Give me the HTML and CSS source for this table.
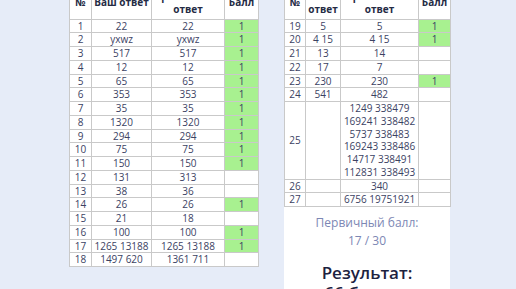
FILE: index.html
```html
<!DOCTYPE html>
<html lang="ru">
<head>
<meta charset="utf-8">
<title>Результаты</title>
<link rel="stylesheet" href="styles.css">
</head>
<body>
<div class="page">
  <table class="res res-left">
    <colgroup><col class="c1"><col class="c2"><col class="c3"><col class="c4"></colgroup>
    <thead>
      <tr><th>№</th><th class="nw">Ваш ответ</th><th>Правильный<br>ответ</th><th>Балл</th></tr>
    </thead>
    <tbody>
      <tr><td>1</td><td>22</td><td>22</td><td class="ok">1</td></tr>
      <tr><td>2</td><td>yxwz</td><td>yxwz</td><td class="ok">1</td></tr>
      <tr><td>3</td><td>517</td><td>517</td><td class="ok">1</td></tr>
      <tr><td>4</td><td>12</td><td>12</td><td class="ok">1</td></tr>
      <tr><td>5</td><td>65</td><td>65</td><td class="ok">1</td></tr>
      <tr><td>6</td><td>353</td><td>353</td><td class="ok">1</td></tr>
      <tr><td>7</td><td>35</td><td>35</td><td class="ok">1</td></tr>
      <tr><td>8</td><td>1320</td><td>1320</td><td class="ok">1</td></tr>
      <tr><td>9</td><td>294</td><td>294</td><td class="ok">1</td></tr>
      <tr><td>10</td><td>75</td><td>75</td><td class="ok">1</td></tr>
      <tr><td>11</td><td>150</td><td>150</td><td class="ok">1</td></tr>
      <tr><td>12</td><td>131</td><td>313</td><td></td></tr>
      <tr><td>13</td><td>38</td><td>36</td><td></td></tr>
      <tr><td>14</td><td>26</td><td>26</td><td class="ok">1</td></tr>
      <tr><td>15</td><td>21</td><td>18</td><td></td></tr>
      <tr><td>16</td><td>100</td><td>100</td><td class="ok">1</td></tr>
      <tr><td>17</td><td>1265 13188</td><td>1265 13188</td><td class="ok">1</td></tr>
      <tr><td>18</td><td>1497 620</td><td>1361 711</td><td></td></tr>
    </tbody>
  </table>

  <div class="panel">
    <table class="res res-right">
      <colgroup><col class="c1"><col class="c2"><col class="c3"><col class="c4"></colgroup>
      <thead>
        <tr><th>№</th><th>Ваш<br>ответ</th><th>Правильный<br>ответ</th><th>Балл</th></tr>
      </thead>
      <tbody>
        <tr><td>19</td><td>5</td><td>5</td><td class="ok">1</td></tr>
        <tr><td>20</td><td>4 15</td><td>4 15</td><td class="ok">1</td></tr>
        <tr><td>21</td><td>13</td><td>14</td><td></td></tr>
        <tr><td>22</td><td>17</td><td>7</td><td></td></tr>
        <tr><td>23</td><td>230</td><td>230</td><td class="ok">1</td></tr>
        <tr><td>24</td><td>541</td><td>482</td><td></td></tr>
        <tr><td>25</td><td></td><td>1249 338479<br>169241 338482<br>5737 338483<br>169243 338486<br>14717 338491<br>112831 338493</td><td></td></tr>
        <tr><td>26</td><td></td><td>340</td><td></td></tr>
        <tr><td>27</td><td></td><td>6756 19751921</td><td></td></tr>
      </tbody>
    </table>
    <div class="summary">
      <p class="primary">Первичный балл:<br>17 / 30</p>
      <p class="result">Результат:</p>
      <p class="score">66 баллов</p>
    </div>
  </div>
</div>
</body>
</html>
```

FILE: styles.css
```css
html, body {
  margin: 0;
  padding: 0;
  background: #e6ecf8;
  font-family: "Open Sans", "Noto Sans", sans-serif;
  overflow: hidden;
}

.page {
  display: flex;
  align-items: flex-start;
  gap: 25px;
  padding-left: 69px;
  margin-top: -14px;
}

.res {
  border-collapse: collapse;
  table-layout: fixed;
  background: #fff;
  border: 1px solid #8f8f8f;
  font-size: 10px;
  line-height: 12.75px;
  color: #3b4263;
}

.res th,
.res td {
  border: 1px solid #c9c9c9;
  padding: 0;
  text-align: center;
  vertical-align: middle;
}

.res th {
  font-weight: 700;
  color: #252b45;
  padding: 3px 1px;
}

.res th.nw {
  white-space: nowrap;
}

.res td.ok {
  background: #a8f190;
}

.res-left { width: 189px; }
.res-left .c1 { width: 22px; }
.res-left .c2 { width: 60px; }
.res-left .c3 { width: 73px; }
.res-left .c4 { width: 34px; }

.res-right { width: 166px; }
.res-right .c1 { width: 21px; }
.res-right .c2 { width: 35px; }
.res-right .c3 { width: 78px; }
.res-right .c4 { width: 32px; }

.panel {
  width: 166px;
  min-height: 340px;
  background: #fff;
}

.summary {
  text-align: center;
  padding-top: 7px;
}

.summary p {
  margin: 0;
}

.primary {
  font-size: 12px;
  line-height: 18px;
  color: #7c87b4;
}

.summary .result {
  margin-top: 13px;
  font-size: 17px;
  line-height: 20px;
  font-weight: 600;
  color: #1c2240;
}

.score {
  font-size: 17px;
  line-height: 20px;
  font-weight: 600;
  color: #1c2240;
}
```
